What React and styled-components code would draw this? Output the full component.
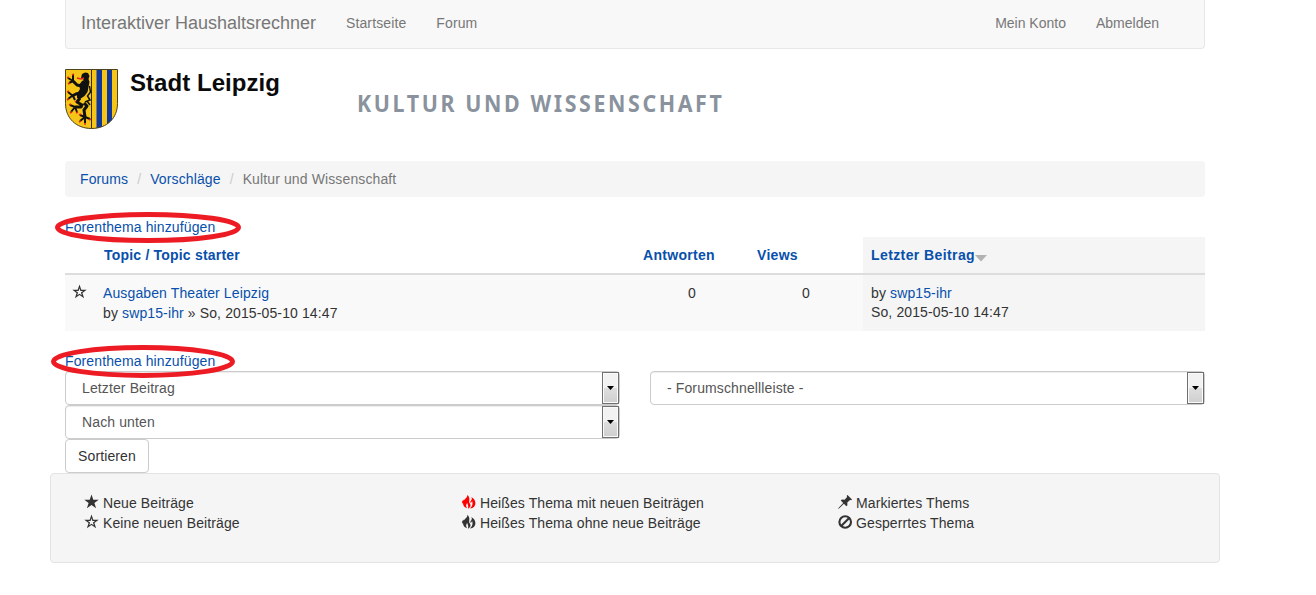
import React from 'react';
import styled, { createGlobalStyle } from 'styled-components';

const GlobalStyle = createGlobalStyle`
  *, *::before, *::after { box-sizing: border-box; }
  body {
    margin: 0;
    background: #fff;
    color: #333;
    font: 14px/20px "Liberation Sans", Arial, sans-serif;
    letter-spacing: 0.12px;
    overflow: hidden;
  }
`;

const Page = styled.div`
  width: 1140px;
  margin-left: 65px;
`;

const Link = styled.a`
  color: #0850ab;
  text-decoration: none;
  letter-spacing: ${(p) => (p.$track === undefined ? 'inherit' : `${p.$track}px`)};
`;

const Navbar = styled.nav`
  display: flex;
  height: 49px;
  padding: 0 30px 0 15px;
  background: #f8f8f8;
  border: 1px solid #e7e7e7;
  border-top: 0;
  border-radius: 0 0 4px 4px;
  color: #777;
`;

const Brand = styled.a`
  width: 250px;
  padding: 13px 0 0;
  font-size: 18px;
  line-height: 21px;
  letter-spacing: 0;
  white-space: nowrap;
`;

const NavItem = styled.a`
  padding: 13px 15px 0;
  letter-spacing: ${(p) => p.$track || 0}px;
  white-space: nowrap;
`;

const Spacer = styled.div`
  flex: 1;
`;

const Header = styled.header`
  display: flex;
  height: 112px;
  padding-top: 20px;
`;

const City = styled.div`
  width: 240px;
  padding-left: 12px;
  color: #0b0b0b;
  font-size: 24px;
  font-weight: bold;
  line-height: 28px;
  letter-spacing: 0.05px;
  white-space: nowrap;
`;

const Title = styled.h1`
  margin: 18px 0 0 -1px;
  color: #8a939d;
  font: bold 23px/32px "Noto Sans", "Open Sans", sans-serif;
  letter-spacing: 2.8px;
  transform: scaleX(0.93);
  transform-origin: left;
  white-space: nowrap;
`;

const Breadcrumb = styled.div`
  display: flex;
  height: 36px;
  margin-bottom: 20px;
  padding: 8px 15px;
  background: #f5f5f5;
  border-radius: 4px;
  color: #777;
`;

const Slash = styled.span`
  width: 22px;
  padding-left: 9px;
  color: #ccc;
`;

const AddTopic = styled.div`
  position: relative;
  height: 20px;
`;

const Ring = styled.svg`
  position: absolute;
  left: ${(p) => p.$left}px;
  top: ${(p) => p.$top}px;
  overflow: visible;
  pointer-events: none;
`;

const TableRow = styled.div`
  display: grid;
  grid-template-columns: 30px 540px 114px 114px 342px;
  height: ${(p) => (p.$head ? 38 : 56)}px;
  margin-bottom: ${(p) => (p.$head ? 0 : 20)}px;
  background: ${(p) => (p.$head ? '#fff' : '#f9f9f9')};
  border-bottom: ${(p) => (p.$head ? '2px solid #ddd' : '0')};
  font-weight: ${(p) => (p.$head ? 'bold' : 'normal')};
`;

const Cell = styled.div`
  padding: 8px;
  padding-left: ${(p) => p.$indent || 8}px;
  text-align: ${(p) => p.$align || 'left'};
  background: ${(p) => (p.$active ? '#f5f5f5' : 'transparent')};
  white-space: nowrap;
`;

const LastPost = styled(Cell)`
  line-height: 19px;
  padding-top: 9px;
`;

const SortArrow = styled.svg`
  margin-left: 0;
  vertical-align: -2px;
`;

const Controls = styled.div`
  display: flex;
  align-items: flex-start;
  gap: 30px;
`;

const Column = styled.div`
  flex: 1;
`;

const SelectBox = styled.div`
  display: flex;
  justify-content: space-between;
  height: 34px;
  padding-left: 16px;
  border: 1px solid #ccc;
  border-radius: 4px;
  box-shadow: inset 0 1px 1px rgba(0, 0, 0, 0.075);
  color: #555;
  line-height: 32px;
`;

const DropButton = styled.span`
  display: flex;
  align-items: center;
  justify-content: center;
  width: 17px;
  height: 32px;
  border: 1px solid #707070;
  box-shadow: inset 0 0 0 1px #fafafa;
  background: linear-gradient(#f2f2f2 0 48%, #ddd 52%, #cfcfcf);
`;

const SortButton = styled.button`
  display: block;
  width: 84px;
  height: 34px;
  padding: 0 0 1px;
  border: 1px solid #ccc;
  border-radius: 4px;
  background: #fff;
  color: #333;
  font: inherit;
  letter-spacing: 0.12px;
`;

const Legend = styled.div`
  display: grid;
  grid-template-columns: 377px 376px 1fr;
  width: 1170px;
  height: 90px;
  margin-left: -15px;
  padding: 19px 0 0 34px;
  background: #f5f5f5;
  border: 1px solid #e3e3e3;
  border-radius: 4px;
`;

const LegendItem = styled.div`
  display: flex;
  height: 20px;
  gap: 4px;
  letter-spacing: 0.1px;
  white-space: nowrap;
`;

const Glyph = styled.svg`
  flex: none;
  margin-top: 2px;
  overflow: visible;
  color: ${(p) => p.$color || '#333'};
`;

const STAR = 'M6.500-.4 8.300 4.700H13.700L9.400 8 11.100 13.300 6.500 10.100 1.900 13.300 3.600 8-.7 4.700H4.700Z';

function Icon({ name, color }) {
  return (
    <Glyph $color={color} width="14" height="14" viewBox="0 0 14 14" fill="currentColor">
      {name === 'star' && <path d={STAR} />}
      {name === 'star-empty' && (
        <path fillRule="evenodd" d={`${STAR}M6.500 3.300 5.600 6H2.900L5.100 7.600 4.200 10.300 6.500 8.700 8.800 10.300 7.900 7.600 10.100 6H7.400Z`} />
      )}
      {name === 'fire' && (
        <path d="M5.200-.2C6.300 2.500 1 4.600 1 7.900c0 2.900 1.700 4.500 4.100 5.300C3.600 11.200 4 9.400 5.300 7.800 5.200 9.700 7 10.400 5.900 13.700 8.600 12.700 9.200 9.900 7.700 8.300 6.100 6.600 9.200 3.100 5.200-.2ZM9.300 2C11 4.900 8 5.700 8.300 7.600 9.300 7.800 10 7 10 5.800 11.300 9.200 10 11.900 7.900 13.600 11.600 13.200 13.500 11.200 13.400 8.100 13.300 5.600 11.900 3.300 9.300 2ZM1.700 4.500C.2 5.700-.3 7 .1 9 .7 7.500 1.900 6.400 1.700 4.500Z" />
      )}
      {name === 'pin' && (
        <path d="M9.500 0 14 4.500 13.200 5.300 12 5 9.300 7.500 9.400 10.200 8.400 11.200 5.900 8.700 1.300 13.200 0 14 .7 12.700 5.200 8 2.800 5.600 3.800 4.600 6.600 4.800 9.100 2.100 8.700.8Z" />
      )}
      {name === 'ban' && (
        <g fill="none" stroke="currentColor" strokeWidth="2.100">
          <circle cx="7.200" cy="7" r="5.800" />
          <path d="M3.200 11 11.200 3" />
        </g>
      )}
    </Glyph>
  );
}

function Crest() {
  return (
    <svg width="53" height="60" viewBox="0 0 53 60">
      <defs>
        <clipPath id="shield">
          <path d="M.5.5h52v34C52.500 49 42 59.500 26.500 59.500S.5 49 .5 34.500Z" />
        </clipPath>
      </defs>
      <g clipPath="url(#shield)">
        <path fill="#f5c518" d="M0 0h53v60H0z" />
        <path fill="#10379b" d="M31.500 0h5.500v60h-5.500zM42 0h5v60h-5z" />
        <path stroke="#332d18" d="M26.500 0v60" />
        <path fill="#111" d="M17 5 20 3.500 23 4 24.500 7 23.500 10 24.500 13 23.500 18 22.500 23 19.500 27 15 30 12 29 12 25 15 20 14 16 17 12 19 11 16 9Z" />
        <path fill="none" stroke="#111" strokeWidth="3" strokeLinejoin="round" d="M17 17 12 16 8 12M15 24 11 25 7 27M15 29 12 33 17 36 16 38 10 38M19 34 22 37 19 41 20 48" />
        <path fill="none" stroke="#111" strokeWidth="2" d="M8 12 3 9M8 12 8 6M8 12 4 14M8 27 3 23M7 27 3 30M8 27 10 31M10 38 5 36M10 38 6 43M10 38 12 43M20 48 15 46M20 48 15 52M20 48 20 54M20 48 25 50" />
        <path fill="none" stroke="#111" strokeWidth="1.500" d="M20 33 25 31 22.500 27 25.500 23 24.500 17M22 32 25 36" />
        <path fill="none" stroke="#e4281f" strokeWidth="1.400" d="m12 9 4 1 3-1M2 9l2-1M7 6l2-1M3 15l2-1M2 23l2-1M2 31l2-1M10 32l1 1M4 36l2-1M5 44l2-1M11 44l2-1M14 46l2-1M14 53l2-1M19 55h2M24 51l2-1" />
      </g>
      <path fill="none" stroke="#4d431c" d="M.5.5h52v34C52.500 49 42 59.500 26.500 59.500S.5 49 .5 34.500Z" />
    </svg>
  );
}

function AddTopicLink({ left, top, width, height }) {
  return (
    <AddTopic>
      <Link href="#">Forenthema hinzufügen</Link>
      <Ring $left={left} $top={top} width={width} height={height}>
        <ellipse
          cx={width / 2}
          cy={height / 2}
          rx={width / 2 - 2.5}
          ry={height / 2 - 2.5}
          fill="none"
          stroke="#ed1c24"
          strokeWidth="5"
        />
      </Ring>
    </AddTopic>
  );
}

function Select({ children }) {
  return (
    <SelectBox>
      <span>{children}</span>
      <DropButton>
        <svg width="7" height="4">
          <path d="M0 0h7L3.500 4Z" />
        </svg>
      </DropButton>
    </SelectBox>
  );
}

export default function App() {
  return (
    <Page>
      <GlobalStyle />
      <Navbar>
        <Brand>Interaktiver Haushaltsrechner</Brand>
        <NavItem $track={0.12}>Startseite</NavItem>
        <NavItem $track={0.12}>Forum</NavItem>
        <Spacer />
        <NavItem>Mein Konto</NavItem>
        <NavItem>Abmelden</NavItem>
      </Navbar>
      <Header>
        <Crest />
        <City>Stadt Leipzig</City>
        <Title>KULTUR UND WISSENSCHAFT</Title>
      </Header>
      <Breadcrumb>
        <Link href="#">Forums</Link>
        <Slash>/</Slash>
        <Link href="#">Vorschläge</Link>
        <Slash>/</Slash>
        <span>Kultur und Wissenschaft</span>
      </Breadcrumb>

      <AddTopicLink left={-10} top={-5} width={186} height={31} />
      <TableRow $head>
        <Cell />
        <Cell $indent={9}><Link href="#" $track={0.2}>Topic / Topic starter</Link></Cell>
        <Cell><Link href="#" $track={0.3}>Antworten</Link></Cell>
        <Cell><Link href="#" $track={0.3}>Views</Link></Cell>
        <Cell $active>
          <Link href="#" $track={0.4}>Letzter Beitrag</Link>
          <SortArrow width="12" height="7"><path d="M0 0h12L6 6.500Z" fill="#b3b3b3" /></SortArrow>
        </Cell>
      </TableRow>
      <TableRow>
        <Cell><Icon name="star-empty" /></Cell>
        <Cell>
          <Link href="#">Ausgaben Theater Leipzig</Link>
          <br />
          by <Link href="#">swp15-ihr</Link> » So, 2015-05-10 14:47
        </Cell>
        <Cell $align="center">0</Cell>
        <Cell $align="center">0</Cell>
        <LastPost $active>
          by <Link href="#">swp15-ihr</Link>
          <br />
          So, 2015-05-10 14:47
        </LastPost>
      </TableRow>

      <AddTopicLink left={-14} top={-6} width={184} height={33} />
      <Controls>
        <Column>
          <Select>Letzter Beitrag</Select>
          <Select>Nach unten</Select>
          <SortButton>Sortieren</SortButton>
        </Column>
        <Column>
          <Select>- Forumschnellleiste -</Select>
        </Column>
      </Controls>

      <Legend>
        <div>
          <LegendItem><Icon name="star" />Neue Beiträge</LegendItem>
          <LegendItem><Icon name="star-empty" />Keine neuen Beiträge</LegendItem>
        </div>
        <div>
          <LegendItem><Icon name="fire" color="#f00" />Heißes Thema mit neuen Beiträgen</LegendItem>
          <LegendItem><Icon name="fire" />Heißes Thema ohne neue Beiträge</LegendItem>
        </div>
        <div>
          <LegendItem><Icon name="pin" />Markiertes Thems</LegendItem>
          <LegendItem><Icon name="ban" />Gesperrtes Thema</LegendItem>
        </div>
      </Legend>
    </Page>
  );
}
